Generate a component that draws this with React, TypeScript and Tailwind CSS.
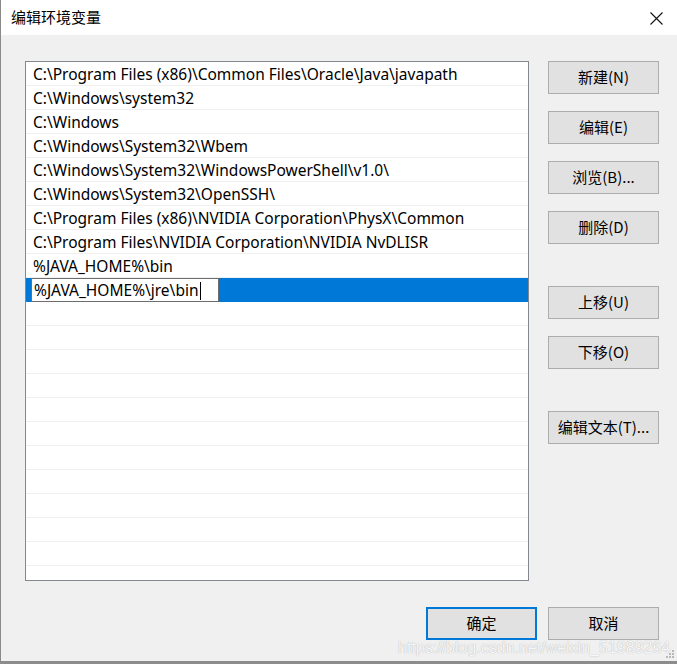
const paths = [
  "C:\\Program Files (x86)\\Common Files\\Oracle\\Java\\javapath",
  "C:\\Windows\\system32",
  "C:\\Windows",
  "C:\\Windows\\System32\\Wbem",
  "C:\\Windows\\System32\\WindowsPowerShell\\v1.0\\",
  "C:\\Windows\\System32\\OpenSSH\\",
  "C:\\Program Files (x86)\\NVIDIA Corporation\\PhysX\\Common",
  "C:\\Program Files\\NVIDIA Corporation\\NVIDIA NvDLISR",
  "%JAVA_HOME%\\bin",
];

const editing = "%JAVA_HOME%\\jre\\bin";
const TOTAL_ROWS = 22;

const cjk = "font-['Microsoft_YaHei_UI','Noto_Sans_CJK_SC',sans-serif]";

function Button({ label, primary }: { label: string; primary?: boolean }) {
  return (
    <button
      className={`w-[111px] h-[33px] bg-[#e1e1e1] text-[15px] text-black flex items-center justify-center ${cjk} ${
        primary ? "border-2 border-[#0078d7]" : "border border-[#adadad]"
      }`}
    >
      {label}
    </button>
  );
}

export default function App() {
  const empty = TOTAL_ROWS - paths.length - 1;

  return (
    <div className="relative w-[677px] h-[664px] bg-[#f0f0f0] flex flex-col border-l border-[#8a8a8a] overflow-hidden">
      {/* title bar */}
      <div className="h-[35px] bg-white flex items-center justify-between pl-[10px] pr-[14px] shrink-0">
        <span className={`text-[15px] text-black ${cjk}`}>编辑环境变量</span>
        <svg width="13" height="13" viewBox="0 0 13 13" className="mt-[1px]">
          <path d="M0.5 0.5 L12.5 12.5 M12.5 0.5 L0.5 12.5" stroke="#111" strokeWidth="1.1" />
        </svg>
      </div>

      {/* body */}
      <div className="flex pl-[24px] pt-[26px]">
        <div className="w-[504px] h-[520px] bg-white border border-[#828790] overflow-hidden">
          {paths.map((p) => (
            <div
              key={p}
              className="h-[24px] border-b border-[#f0f0f0] flex items-center pl-[7px] pt-[3px] text-[15.5px] text-black font-['Noto_Sans',sans-serif] whitespace-nowrap"
            >
              {p}
            </div>
          ))}
          <div className="h-[24px] bg-[#0078d7] flex items-center pl-[5px]">
            <div className="w-[188px] h-[24px] bg-white border border-[#6e6e6e] flex items-center pl-[2px] pt-[2px] text-[15.5px] text-black font-['Noto_Sans',sans-serif] whitespace-nowrap">
              {editing}
              <span className="w-px h-[18px] bg-black ml-[1px]" />
            </div>
          </div>
          {Array.from({ length: empty }).map((_, i) => (
            <div key={i} className="h-[24px] border-b border-[#f0f0f0] shrink-0" />
          ))}
        </div>

        <div className="ml-[19px] flex flex-col">
          <Button label="新建(N)" />
          <div className="mt-[17px]">
            <Button label="编辑(E)" />
          </div>
          <div className="mt-[17px]">
            <Button label="浏览(B)..." />
          </div>
          <div className="mt-[17px]">
            <Button label="删除(D)" />
          </div>
          <div className="mt-[42px]">
            <Button label="上移(U)" />
          </div>
          <div className="mt-[17px]">
            <Button label="下移(O)" />
          </div>
          <div className="mt-[42px]">
            <Button label="编辑文本(T)..." />
          </div>
        </div>
      </div>

      {/* footer */}
      <div className="flex justify-end gap-[11px] pr-[18px] mt-[26px]">
        <Button label="确定" primary />
        <Button label="取消" />
      </div>

      {/* watermark overlay */}
      <div className="absolute left-[397px] top-[636px] text-[16px] text-white/90 font-['Liberation_Sans',sans-serif] [text-shadow:0_0_1px_#9a9a9a] whitespace-nowrap">
        https://blog.csdn.net/weixin_51989264
      </div>

      {/* resize grip */}
      <svg width="10" height="10" viewBox="0 0 10 10" className="absolute right-[2px] bottom-[5px]">
        <rect x="7" y="1" width="2" height="2" fill="#b8b8b8" />
        <rect x="4" y="4" width="2" height="2" fill="#b8b8b8" />
        <rect x="7" y="4" width="2" height="2" fill="#b8b8b8" />
        <rect x="1" y="7" width="2" height="2" fill="#b8b8b8" />
        <rect x="4" y="7" width="2" height="2" fill="#b8b8b8" />
        <rect x="7" y="7" width="2" height="2" fill="#b8b8b8" />
      </svg>

      <div className="absolute left-0 right-0 bottom-0 h-[3px] bg-[#8c8c8c]" />
    </div>
  );
}
